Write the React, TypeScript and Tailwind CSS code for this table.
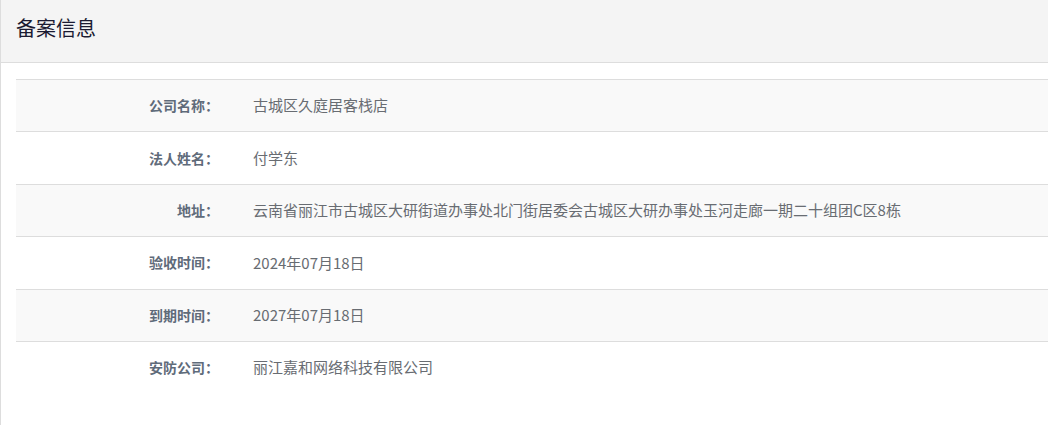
const rows = [
  { label: "公司名称：", value: "古城区久庭居客栈店" },
  { label: "法人姓名：", value: "付学东" },
  { label: "地址：", value: "云南省丽江市古城区大研街道办事处北门街居委会古城区大研办事处玉河走廊一期二十组团C区8栋" },
  { label: "验收时间：", value: "2024年07月18日" },
  { label: "到期时间：", value: "2027年07月18日" },
  { label: "安防公司：", value: "丽江嘉和网络科技有限公司" },
];

export default function App() {
  return (
    <div
      className="h-[425px] w-[1048px] overflow-hidden border-l border-[#dddddd] bg-white"
      style={{ fontFamily: '"Microsoft YaHei", "Noto Sans CJK SC", sans-serif' }}
    >
      <div className="flex h-[63px] items-center border-b border-[#dddddd] bg-[#f4f4f4] pl-[15px] pb-[7px]">
        <h2 className="text-[20px] text-[#1b1b32]">备案信息</h2>
      </div>
      <div className="pl-[15px] pt-[16px]">
        <div>
          {rows.map((row, i) => (
            <div
              key={row.label}
              className={`flex h-[52.4px] items-center border-t border-[#dddddd] ${
                i % 2 === 0 ? "bg-[#f9f9f9]" : "bg-white"
              }`}
            >
              <div className="w-[203px] shrink-0 text-right text-[14px] font-bold text-[#5f6b7a]">{row.label}</div>
              <div className="pl-[34px] text-[15px] text-[#686c72]">{row.value}</div>
            </div>
          ))}
        </div>
      </div>
    </div>
  );
}
